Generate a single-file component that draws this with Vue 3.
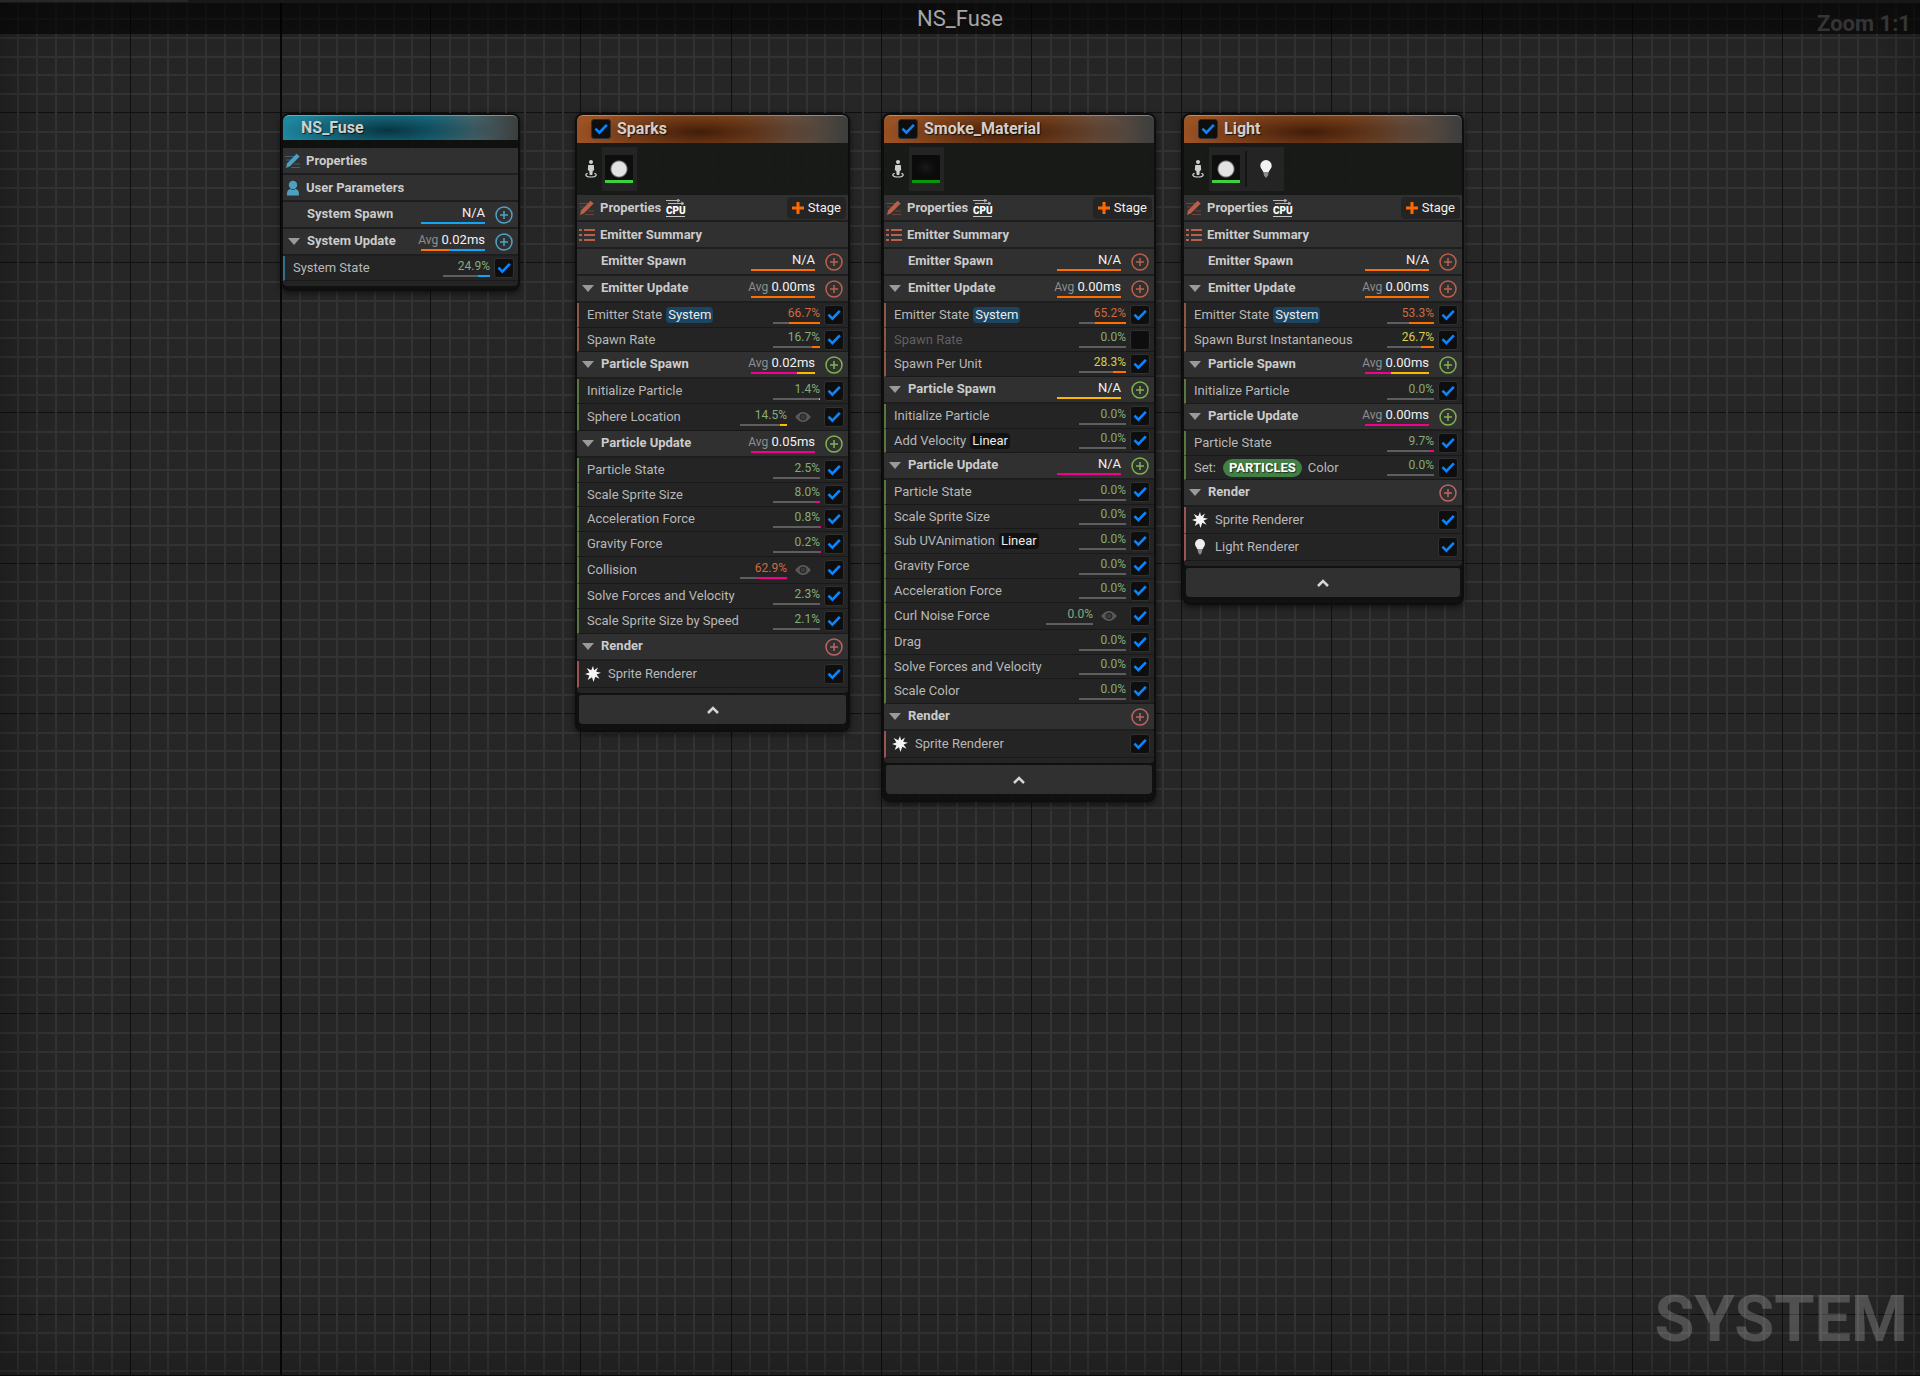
<script setup>
import { reactive } from 'vue'

const ORIGIN_X = 281
const ORIGIN_Y = 113
const MAJOR = 150.2
const gridLines = (origin, extent) => {
  const lines = []
  const step = MAJOR / 8
  for (let i = -Math.floor(origin / step); origin + i * step < extent; i++) {
    lines.push({ at: Math.round(origin + i * step), kind: i === 0 ? 'origin' : i % 8 === 0 ? 'major' : 'minor' })
  }
  return lines.sort((a, b) => (a.kind === 'minor' ? 0 : 1) - (b.kind === 'minor' ? 0 : 1))
}
const columns = gridLines(ORIGIN_X, 3840)
const rows = gridLines(ORIGIN_Y, 2160).map((l) => ({ ...l, kind: l.kind === 'origin' ? 'major' : l.kind }))

const ORANGE = '#ff6f00'
const YELLOW = '#ffb800'
const PINK = '#f5008c'
const BLUE = '#12a5f5'

// name, percent, colour of the share bar, extras
const mod = (name, pct, color, extra = {}) => ({ name, pct, color, on: true, ...extra })
const split = (a, b, at) => `linear-gradient(90deg, ${a} ${at}%, ${b} ${at}%)`
const tone = (m) => (m.pct >= 50 ? 'hot' : m.pct >= 25 ? 'warm' : 'cool')

const emitterSpawn = () => ({ name: 'Emitter Spawn', tint: 'emitter', value: 'N/A', bar: ORANGE, open: false, modules: [] })
const render = (...list) => ({ name: 'Render', tint: 'render', open: true, modules: list.map(([name, icon]) => ({ name, icon, on: true })) })

const nodes = reactive([
  {
    id: 'system', title: 'NS_Fuse', system: true,
    sections: [
      { name: 'System Spawn', tint: 'system', value: 'N/A', bar: BLUE, modules: [] },
      { name: 'System Update', tint: 'system', value: '0.02ms', avg: true, bar: split(ORANGE, BLUE, 44), open: true, modules: [mod('System State', 24.9, BLUE)] },
    ],
  },
  {
    id: 'sparks', title: 'Sparks', on: true, thumbs: ['ball'],
    sections: [
      emitterSpawn(),
      { name: 'Emitter Update', tint: 'emitter', value: '0.00ms', avg: true, bar: ORANGE, open: true, modules: [
        mod('Emitter State', 66.7, ORANGE, { tag: 'System' }),
        mod('Spawn Rate', 16.7, ORANGE),
      ] },
      { name: 'Particle Spawn', tint: 'particle', value: '0.02ms', avg: true, bar: split(PINK, YELLOW, 72), open: true, modules: [
        mod('Initialize Particle', 1.4, YELLOW),
        mod('Sphere Location', 14.5, YELLOW, { eye: true }),
      ] },
      { name: 'Particle Update', tint: 'particle', value: '0.05ms', avg: true, bar: PINK, open: true, modules: [
        mod('Particle State', 2.5, PINK),
        mod('Scale Sprite Size', 8.0, PINK),
        mod('Acceleration Force', 0.8, PINK),
        mod('Gravity Force', 0.2, PINK),
        mod('Collision', 62.9, PINK, { eye: true }),
        mod('Solve Forces and Velocity', 2.3, PINK),
        mod('Scale Sprite Size by Speed', 2.1, PINK),
      ] },
      render(['Sprite Renderer', 'burst']),
    ],
  },
  {
    id: 'smoke', title: 'Smoke_Material', on: true, thumbs: ['smoke'],
    sections: [
      emitterSpawn(),
      { name: 'Emitter Update', tint: 'emitter', value: '0.00ms', avg: true, bar: ORANGE, open: true, modules: [
        mod('Emitter State', 65.2, ORANGE, { tag: 'System' }),
        mod('Spawn Rate', 0, ORANGE, { on: false }),
        mod('Spawn Per Unit', 28.3, ORANGE),
      ] },
      { name: 'Particle Spawn', tint: 'particle', value: 'N/A', bar: YELLOW, open: true, modules: [
        mod('Initialize Particle', 0, YELLOW),
        mod('Add Velocity', 0, YELLOW, { tag: 'Linear' }),
      ] },
      { name: 'Particle Update', tint: 'particle', value: 'N/A', bar: PINK, open: true, modules: [
        mod('Particle State', 0, PINK),
        mod('Scale Sprite Size', 0, PINK),
        mod('Sub UVAnimation', 0, PINK, { tag: 'Linear' }),
        mod('Gravity Force', 0, PINK),
        mod('Acceleration Force', 0, PINK),
        mod('Curl Noise Force', 0, PINK, { eye: true }),
        mod('Drag', 0, PINK),
        mod('Solve Forces and Velocity', 0, PINK),
        mod('Scale Color', 0, PINK),
      ] },
      render(['Sprite Renderer', 'burst']),
    ],
  },
  {
    id: 'light', title: 'Light', on: true, thumbs: ['ball', 'bulb'],
    sections: [
      emitterSpawn(),
      { name: 'Emitter Update', tint: 'emitter', value: '0.00ms', avg: true, bar: ORANGE, open: true, modules: [
        mod('Emitter State', 53.3, ORANGE, { tag: 'System' }),
        mod('Spawn Burst Instantaneous', 26.7, ORANGE),
      ] },
      { name: 'Particle Spawn', tint: 'particle', value: '0.00ms', avg: true, bar: split(PINK, YELLOW, 41), open: true, modules: [
        mod('Initialize Particle', 0, YELLOW),
      ] },
      { name: 'Particle Update', tint: 'particle', value: '0.00ms', avg: true, bar: PINK, open: true, modules: [
        mod('Particle State', 9.7, PINK),
        mod('Set:', 0, PINK, { pill: 'PARTICLES', suffix: 'Color' }),
      ] },
      render(['Sprite Renderer', 'burst'], ['Light Renderer', 'bulb']),
    ],
  },
])
</script>

<template>
  <main class="editor">
    <svg class="grid" aria-hidden="true">
      <rect v-for="(l, i) in rows" :key="'r' + i" :class="l.kind" x="0" :y="l.at - 1" width="100%" :height="l.kind === 'minor' ? 2 : 1" />
      <rect v-for="(l, i) in columns" :key="'c' + i" :class="l.kind" :x="l.at - 1" y="0" :width="l.kind === 'major' ? 1 : 2" height="100%" />
    </svg>
    <div class="vignette"></div>

    <div class="tabstrip"><span></span></div>
    <header class="titlebar">
      <h1>NS_Fuse</h1>
      <span class="zoom">Zoom 1:1</span>
    </header>

    <section class="canvas">
      <article v-for="n in nodes" :key="n.id" class="node" :class="['at-' + n.id, n.system ? 'is-system' : 'is-emitter']">
        <header class="head">
          <input v-if="!n.system" v-model="n.on" type="checkbox" :aria-label="'Enable ' + n.title" />
          <h2>{{ n.title }}</h2>
        </header>

        <div v-if="n.thumbs" class="preview">
          <svg class="person" viewBox="0 0 12 18" aria-hidden="true">
            <circle cx="6" cy="2" r="2" />
            <path d="M3.2 5h5.600l.4 5.200-1.400.5L7.300 15H4.700L4.200 10.700 2.800 10.200z" />
            <path class="ring" d="M2.600 13.200C-.6 14.500.6 17 6 17s6.600-2.500 3.400-3.800" />
          </svg>
          <div class="thumbs">
            <span v-for="t in n.thumbs" :key="t" class="thumb" :class="t">
              <svg v-if="t === 'bulb'" viewBox="0 0 16 18" class="bulb-icon" aria-hidden="true">
                <path fill="#f2f2f2" d="M8 0a5.700 5.700 0 0 0-5.700 5.700C2.300 8.500 4.600 9.500 5.300 12h5.400c.7-2.500 3-3.500 3-6.300A5.700 5.700 0 0 0 8 0z" />
                <path fill="#8b8b8b" d="M5.300 12h5.400l-.7 3.500L8 18l-2-2.500z" />
              </svg>
              <i v-else></i>
            </span>
          </div>
        </div>
        <div v-else class="spacer"></div>

        <div class="body">
          <div class="row fixed">
            <svg class="lead" viewBox="0 0 16 16" aria-hidden="true">
              <path class="faint" d="M0 3.500h9M1 7h5M9 11h6M6 14.500h9" />
              <path class="solid" d="M1 15l1-4.500L11.500.8l3.200 2.700L5 13.300z" />
            </svg>
            <span class="name">Properties</span>
            <template v-if="!n.system">
              <span class="cpu">
                <svg viewBox="0 0 19 6" aria-hidden="true"><path d="M0 1.500h13M2 4.500h15M11 0l3 1.500L11 3M15 3l3 1.500L15 6" /></svg>
                <b>CPU</b>
              </span>
              <button type="button" class="stage">
                <svg viewBox="0 0 12 12" aria-hidden="true"><path d="M6 0v12M0 6h12" /></svg>Stage
              </button>
            </template>
          </div>
          <div class="row fixed">
            <svg v-if="n.system" class="lead" viewBox="0 0 16 16" aria-hidden="true">
              <circle class="solid" cx="8" cy="5" r="4.200" />
              <path class="solid" d="M2 15.500c0-4 .5-6 3.500-6.500 1.500 1.200 3.500 1.200 5 0 3 .5 3.500 2.500 3.500 6.500z" />
            </svg>
            <svg v-else class="lead" viewBox="0 0 16 16" aria-hidden="true">
              <path class="list" d="M0 3h3M5 3h11M0 8h3M5 8h11M0 13h3M5 13h11" />
            </svg>
            <span class="name">{{ n.system ? 'User Parameters' : 'Emitter Summary' }}</span>
          </div>

          <section v-for="s in n.sections" :key="s.name" :class="'tint-' + s.tint">
            <div class="row section">
              <span class="fold"><i v-if="s.open"></i></span>
              <h3 class="name">{{ s.name }}</h3>
              <span v-if="s.value" class="stat">
                <span><small v-if="s.avg">Avg</small> {{ s.value }}</span>
                <i :style="{ background: s.bar }"></i>
              </span>
              <button type="button" class="add" :aria-label="'Add to ' + s.name">
                <svg viewBox="0 0 18 18" aria-hidden="true"><circle cx="9" cy="9" r="8" /><path d="M9 5v8M5 9h8" /></svg>
              </button>
            </div>
            <ul v-if="s.modules.length">
              <li v-for="m in s.modules" :key="m.name" :class="{ off: !m.on, renderer: m.icon, watched: m.eye }">
                <svg v-if="m.icon === 'burst'" class="r-icon" viewBox="0 0 16 16" aria-hidden="true">
                  <path fill="#f4f4f4" d="M8 0l1.100 4.300 3.900-2.800L11.200 5.700 16 6.800l-4.400 1.600 3 4.400-4.300-2L8.500 16l-1.500-4.800-4.300 2.900 1.700-4.500L0 8l4.400-1.400L1.700 2l4.500 2.200z" />
                </svg>
                <svg v-if="m.icon === 'bulb'" class="r-icon" viewBox="0 0 16 16" aria-hidden="true">
                  <path fill="#ededed" d="M8 0a5 5 0 0 0-5 5c0 2.500 2 3.400 2.600 5.600h4.800C11 8.400 13 7.500 13 5a5 5 0 0 0-5-5z" />
                  <path fill="#8b8b8b" d="M5.600 10.600h4.800l-.6 3L8 16l-1.800-2.400z" />
                </svg>
                <label :for="n.id + '-' + s.name + '-' + m.name">{{ m.name }}</label>
                <span v-if="m.tag" class="tag" :class="m.tag.toLowerCase()">{{ m.tag }}</span>
                <template v-if="m.pill">
                  <span class="pill">{{ m.pill }}</span>
                  <span class="suffix">{{ m.suffix }}</span>
                </template>
                <span v-if="!m.icon" class="share" :class="tone(m)">
                  {{ m.pct.toFixed(1) }}%
                  <i><b :style="{ width: m.pct + '%', background: m.color }"></b></i>
                </span>
                <svg v-if="m.eye" class="eye" viewBox="0 0 16 10" aria-hidden="true">
                  <path d="M.8 5C3 1.800 5.500.7 8 .7S13 1.800 15.200 5C13 8.200 10.500 9.300 8 9.300S3 8.200.8 5z" />
                  <circle cx="8" cy="5" r="3" />
                </svg>
                <input :id="n.id + '-' + s.name + '-' + m.name" v-model="m.on" type="checkbox" />
              </li>
            </ul>
          </section>
        </div>

        <button v-if="!n.system" type="button" class="collapse" aria-label="Collapse emitter">
          <svg viewBox="0 0 12 8" aria-hidden="true"><path d="M1 7l5-5 5 5" /></svg>
        </button>
      </article>
    </section>

    <p class="watermark">SYSTEM</p>
  </main>
</template>

<style>
body { margin: 0; background: #262626; }
</style>

<style scoped>
.editor {
  position: relative;
  display: flex;
  flex-direction: column;
  min-height: 100vh;
  overflow: hidden;
  background: #262626;
  border-bottom: 1px solid #0d080a;
  box-sizing: border-box;
  color: #c4c4c4;
  font: 13px/16px Roboto, "Liberation Sans", sans-serif;
}
h1, h2, h3, p, ul { margin: 0; padding: 0; font: inherit; }
ul { list-style: none; }
button { padding: 0; border: 0; background: none; color: inherit; font: inherit; cursor: pointer; }
svg { flex: none; display: block; }

.grid, .vignette { position: absolute; inset: 0; width: 100%; height: 100%; }
.grid .minor { fill: #333; }
.grid .major { fill: #101010; }
.grid .origin { fill: #080808; }
.vignette { box-shadow: inset 0 0 70px rgba(0, 0, 0, .4); }

.tabstrip { position: relative; height: 3px; background: #181818; }
.tabstrip span { display: block; width: 188px; height: 2px; background: #272727; }
.titlebar {
  position: relative;
  display: flex;
  justify-content: center;
  height: 31px;
  background: rgba(0, 0, 0, .6);
}
.titlebar h1 { color: #a6a6a6; font-size: 22px; line-height: 31px; }
.zoom {
  position: absolute;
  top: 7px;
  right: 9px;
  color: #353535;
  font-size: 22px;
  font-weight: 700;
  line-height: 28px;
}
.canvas { flex: 1; }
.watermark {
  position: relative;
  align-self: flex-end;
  padding: 0 12px 12px 0;
  color: rgba(255, 255, 255, .2);
  font-size: 65px;
  font-weight: 700;
  line-height: 88px;
}

.node {
  position: absolute;
  top: 113px;
  display: flex;
  flex-direction: column;
  box-sizing: border-box;
  border: 2px solid #0d0e0d;
  border-radius: 8px;
  background: rgba(13, 15, 13, .88);
  box-shadow: 0 2px 6px rgba(0, 0, 0, .6);
}
.at-system { left: 281px; width: 239px; }
.at-sparks { left: 575px; width: 275px; }
.at-smoke { left: 882px; width: 274px; }
.at-light { left: 1182px; width: 282px; }

.head {
  display: flex;
  align-items: center;
  gap: 6px;
  height: 28px;
  padding: 0 0 1px 14px;
  border-radius: 6px 6px 0 0;
  box-sizing: border-box;
  border-top: 1px solid rgba(255, 255, 255, .35);
  background:
    radial-gradient(ellipse 46% 90% at 45% 60%, rgba(50, 20, 5, .85), rgba(50, 20, 5, 0)),
    linear-gradient(90deg, #9c5223 0%, #94501f 55%, #6b5140 78%, #3c3e3d 100%);
}
.is-system .head {
  height: 25px;
  padding-left: 18px;
  padding-bottom: 0;
  background:
    radial-gradient(ellipse 46% 90% at 45% 60%, rgba(4, 40, 50, .85), rgba(4, 40, 50, 0)),
    linear-gradient(90deg, #1f86a0 0%, #1b7c94 60%, #45646b 80%, #3c3e3d 100%);
}
.head h2 { padding-bottom: 1px; color: #d2cfcc; font-size: 16px; font-weight: 700; line-height: 20px; text-shadow: 1px 1px 1px rgba(0, 0, 0, .7); }
.spacer { height: 8px; }
.preview { display: flex; align-items: center; gap: 5px; height: 52px; padding-left: 8px; background: rgba(30, 34, 30, .6); }
.person { width: 12px; height: 18px; fill: #cfcfcf; }
.person .ring { fill: none; stroke: #cfcfcf; stroke-width: 1.2; }
.thumbs { display: flex; height: 44px; background: #232423; }
.thumb { display: flex; justify-content: center; align-items: center; width: 28px; padding: 0 4px 0 3px; }
.thumb i { width: 28px; height: 25px; border-bottom: 3px solid #3fd03f; background: radial-gradient(circle at 50% 56%, #e2e2e2 0 7px, rgba(226, 226, 226, 0) 9px), #0e0e0e; }
.thumb.smoke i { border-color: #0b970b; background: radial-gradient(ellipse at 50% 50%, #161a19 0, #0b0b0b 50%); }
.thumb.bulb { position: relative; padding-left: 8px; }
.thumb.bulb::before { content: ""; position: absolute; left: 1px; top: 4px; width: 2px; height: 36px; background: #141514; }
.bulb-icon { width: 16px; height: 18px; }

.body { padding-bottom: 5px; border-radius: 0 0 4px 4px; background: #242424; }
.is-system .body { margin-bottom: 3px; }
.row {
  display: flex;
  align-items: center;
  height: 27px;
  box-sizing: border-box;
  border-bottom: 2px solid #1e1e1e;
  background: #303030;
  color: #cbcbcb;
}
.row .name { font-size: 13px; font-weight: 700; line-height: 16px; }
.fixed { padding-left: 2px; gap: 5px; }
.section { padding-right: 5px; }
.section .name { flex: 1; padding-bottom: 1px; }
.lead { width: 16px; height: 16px; color: #b9604a; }
.is-system .lead { color: #4f9fc2; }
.lead .solid { fill: currentColor; }
.lead .faint { fill: none; stroke: currentColor; stroke-width: 1; opacity: .45; }
.lead .list { fill: none; stroke: currentColor; stroke-width: 2; }
.fold { width: 24px; }
.fold i { display: block; width: 12px; height: 7px; margin-left: 5px; background: #9a9a9a; clip-path: polygon(0 0, 100% 0, 50% 100%); }

.cpu { display: flex; flex-direction: column; align-items: center; width: 19px; border-bottom: 1px solid #c8c8c8; }
.cpu svg { width: 19px; height: 6px; fill: none; stroke: #b8b8b8; stroke-width: 1; }
.cpu b { color: #fff; font-size: 10px; font-weight: 900; line-height: 11px; }
.stage {
  display: flex;
  align-items: center;
  gap: 4px;
  height: 22px;
  margin: 0 2px 0 auto;
  padding: 0 5px;
  border-radius: 4px;
  background: #242424;
  color: #f0f0f0;
  line-height: 16px;
}
.stage svg { width: 12px; height: 12px; stroke: #ff6a00; stroke-width: 3; }

.stat { display: flex; flex-direction: column; align-items: flex-end; width: 64px; margin-right: 10px; padding-bottom: 1px; color: #f2f2f2; white-space: nowrap; line-height: 16px; }
.stat small { color: #8f8f8f; font-size: 12px; }
.stat i { align-self: stretch; height: 2px; margin-top: 1px; }
.add { width: 18px; height: 18px; }
.add svg { width: 18px; height: 18px; fill: none; stroke: currentColor; stroke-width: 1.5; }
.tint-system { --edge: #35708a; }
.tint-emitter { --edge: #8a5845; }
.tint-particle { --edge: #587840; }
.tint-render { --edge: #9a5454; }
.tint-system .add { color: #4fa3c4; }
.tint-emitter .add { color: #bd6049; }
.tint-particle .add { color: #7db352; }
.tint-render .add { color: #bd6464; }

li {
  display: flex;
  align-items: center;
  height: 25px;
  padding: 0 4px 0 8px;
  box-sizing: border-box;
  border-left: 2px solid var(--edge);
  border-bottom: 1px solid #191919;
  background: #242424;
  color: #b8b8b8;
}
li:nth-child(3n + 2) { height: 24px; }
li.watched { height: 27px; }
li.renderer { height: 27px; padding-left: 6px; }
li.off label { color: #606060; }
label { font-size: 13px; line-height: 16px; white-space: nowrap; }
.r-icon { width: 16px; height: 16px; margin-right: 7px; }
.tag { margin-left: 4px; padding: 0 2px; border-radius: 4px; background: #111; color: #ececec; line-height: 16px; }
.tag.system { background: #1b4563; }
.pill {
  margin: 0 6px 0 7px;
  padding: 0 6px;
  border-radius: 9px;
  background: #417f45;
  color: #fff;
  font-weight: 700;
  line-height: 18px;
  text-shadow: 1px 1px 1px rgba(0, 0, 0, .6);
}
.share { width: 47px; margin-left: auto; margin-right: 4px; padding-bottom: 1px; font-size: 12px; line-height: 15px; text-align: right; }
.share i { display: flex; justify-content: flex-end; height: 2px; margin-top: 1px; background: #5e5e5e; }
.share.cool { color: #86ac78; }
.share.warm { color: #d8cf4e; }
.share.hot { color: #cf6a40; }
.eye { width: 16px; height: 10px; margin: 0 13px 0 4px; fill: #555; stroke: #686868; stroke-width: 1; }
.eye circle { fill: #3a3a3a; stroke: #242424; }
li > input { margin-left: auto; }
.renderer label { margin-right: auto; }
.share ~ input { margin-left: 0; }

input[type="checkbox"] {
  appearance: none;
  flex: none;
  display: grid;
  width: 20px;
  height: 20px;
  margin-top: 0;
  margin-right: 0;
  margin-bottom: 0;
  border: 1px solid #303030;
  border-radius: 3px;
  background: #0e0e0e;
  cursor: pointer;
}
.head input { margin-left: 0; }
input[type="checkbox"]:checked::before {
  content: "";
  background: #0a84ff;
  clip-path: polygon(14% 53%, 24% 43%, 41% 60%, 77% 22%, 88% 32%, 41% 80%);
}

.collapse {
  display: flex;
  justify-content: center;
  align-items: center;
  height: 29px;
  margin: 2px 2px 6px;
  border-radius: 2px 2px 4px 4px;
  background: #303030;
}
.collapse svg { width: 12px; height: 8px; fill: none; stroke: #d6d6d6; stroke-width: 2.5; }
</style>
